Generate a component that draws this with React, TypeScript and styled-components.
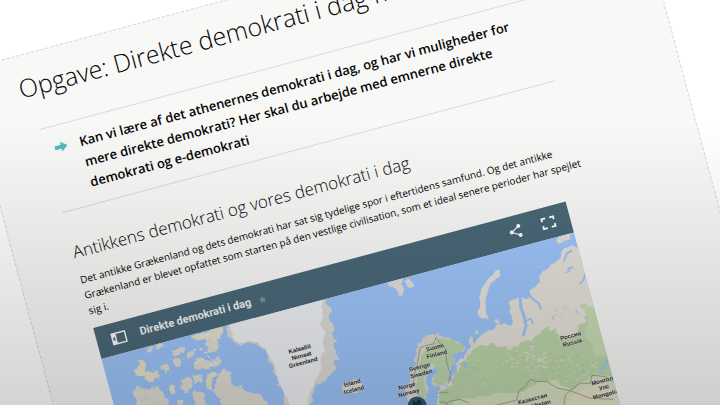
import React from "react";
import styled, { createGlobalStyle } from "styled-components";

const GlobalStyle = createGlobalStyle`
  *, *::before, *::after { box-sizing: border-box; }
  body {
    margin: 0;
    background: #fff;
    color: #050505;
    font-family: "Open Sans", "Noto Sans", sans-serif;
    text-rendering: geometricPrecision;
  }
`;

const Stage = styled.main`
  position: relative;
  height: 100vh;
  overflow: hidden;
  background: #fff;

  &::after {
    content: "";
    position: absolute;
    inset: 0;
    pointer-events: none;
    background: linear-gradient(rgba(0, 0, 0, 0) 30%, rgba(0, 0, 0, 0.17) 100%);
  }
`;

const Paper = styled.article`
  width: calc(100vw - 25px);
  min-height: 640px;
  margin: 70px 0 0 -37px;
  padding: 15px 48px 0;
  background: #f8f8f6;
  border: 1px dashed #d6d6d9;
  transform: rotate(-15deg);
  transform-origin: 0 0;
`;

const Title = styled.h1`
  margin: 0 0 25px;
  font-size: 25px;
  line-height: 36px;
  font-weight: 300;
  white-space: nowrap;
`;

const Content = styled.div`
  max-width: 532px;
  padding-left: 10px;
`;

const Callout = styled.section`
  display: flex;
  gap: 12px;
  max-width: 510px;
  padding: 11px 0 11px 9px;
  border-top: 1px solid #dadad8;
  border-bottom: 1px solid #dadad8;

  p {
    flex: 1;
    margin: 0;
    font-size: 13px;
    line-height: 21px;
    font-weight: 600;
  }
`;

const ArrowIcon = styled.svg`
  width: 14px;
  height: 21px;
  fill: #4fbcc0;
`;

const Heading = styled.h2`
  margin: 28px 0 7px;
  font-size: 17px;
  line-height: 26px;
  font-weight: 300;
`;

const Paragraph = styled.p`
  margin: 0 0 10px;
  font-size: 10px;
  line-height: 16px;
`;

const MapPanel = styled.section`
  max-width: 489px;
`;

const MapBar = styled.header`
  display: flex;
  align-items: center;
  gap: 12px;
  height: 32px;
  padding: 0 14px 0 12px;
  background: #4a6878;
  color: #fff;
  font-family: Roboto, sans-serif;
`;

const MapName = styled.div`
  display: flex;
  align-items: center;
  gap: 8px;
`;

const MapTitle = styled.h3`
  margin: 0;
  font-size: 11px;
  line-height: 16px;
  font-weight: 700;
  color: #f1f4f5;
`;

const IconButton = styled.button<{ $faint?: boolean }>`
  display: flex;
  padding: 0;
  border: 0;
  background: none;
  color: ${(p) => (p.$faint ? "#7f929d" : "#fff")};
`;

const Actions = styled.div`
  display: flex;
  gap: 18px;
  margin-left: auto;
`;

const MapView = styled.div`
  position: relative;
  height: 200px;
  overflow: hidden;
  background: #9dc5fa;
`;

const MapDrawing = styled.svg`
  display: block;
  width: 489px;
  height: 200px;
`;

const MapLabel = styled.span<{ $x: number; $y: number }>`
  position: absolute;
  left: ${(p) => p.$x}px;
  top: ${(p) => p.$y}px;
  transform: translate(-50%, -50%);
  font: 700 6px/7px "Liberation Sans", Arial, sans-serif;
  color: #222;
  text-align: center;
  white-space: pre;
  text-shadow: 0 0 1px #fff, 0 0 1px #fff;
`;

type Pt = [number, number];

/* Small deterministic generator, so that the coast is the same on each render. */
function random(seed: number) {
  let s = seed;
  return () => {
    s = (s * 16807) % 2147483647;
    return s / 2147483647 - 0.5;
  };
}

/* Turns "x,y x,y" into a closed path with a ragged, coast-like edge. */
function coast(text: string, amp = 6, seed = 7) {
  const next = random(seed);
  let pts: Pt[] = text.trim().split(/\s+/).map((p) => p.split(",").map(Number) as Pt);
  let a = amp;
  for (let pass = 0; pass < 2; pass++) {
    const out: Pt[] = [];
    pts.forEach((p, i) => {
      const q = pts[(i + 1) % pts.length];
      out.push(p, [(p[0] + q[0]) / 2 + next() * a, (p[1] + q[1]) / 2 + next() * a]);
    });
    pts = out;
    a = a * 0.8;
  }
  return "M" + pts.map((p) => p.map((n) => n.toFixed(1)).join(" ")).join("L") + "Z";
}

/* Scatter of small ragged patches inside a box. */
function patches(x: number, y: number, w: number, h: number, count: number, size: number, seed: number) {
  const next = random(seed);
  let d = "";
  for (let i = 0; i < count; i++) {
    const cx = x + (next() + 0.5) * w;
    const cy = y + (next() + 0.5) * h;
    const pts: string[] = [];
    for (let k = 0; k < 8; k++) {
      const r = size * (0.7 + next());
      const t = (k / 8) * Math.PI * 2;
      pts.push(`${(cx + Math.cos(t) * r * 1.5).toFixed(1)} ${(cy + Math.sin(t) * r * 0.8).toFixed(1)}`);
    }
    d += "M" + pts.join("L") + "Z";
  }
  return d;
}

const EAST_LAND =
  "175,570 175,530 172,515 185,500 200,502 208,485 218,465 230,450 225,430 242,415 255,405 262,388 278,382 300,348 330,330 350,315 378,312 394,318 398,300 388,275 386,245 410,235 424,230 436,236 452,228 450,210 478,188 480,165 505,145 520,130 542,112 552,84 575,75 600,90 760,300 760,570";
const EAST_GREEN =
  "175,570 200,505 222,470 235,455 232,430 262,412 275,390 300,375 340,385 360,380 385,388 410,378 440,362 475,345 505,325 530,322 545,350 580,352 605,310 622,285 600,255 640,265 760,400 760,570";

const canada = [
  "147,275 160,268 165,288 158,300 172,305 188,308 202,303 211,313 205,325 190,328 176,337 163,325 150,318 137,310 142,292",
  "137,350 150,349 175,360 190,351 207,355 215,366 222,382 237,395 237,425 140,425 134,380",
  "275,326 300,322 306,340 294,358 303,374 282,370 270,347",
  "308,314 335,314 335,340 310,342",
  "350,312 372,305 392,308 368,322 362,345 376,362 350,356 345,332",
  "392,308 410,300 425,312 420,335 432,350 455,345 470,365 500,370 525,392 540,425 400,425 392,385 372,366 378,340",
  "315,272 340,265 372,272 388,258 392,280 360,290 330,298 312,290",
  "345,220 365,205 382,212 388,230 372,245 350,242",
  "300,205 330,192 360,182 395,172 390,200 372,208 340,204 322,212",
  "408,175 450,165 452,186 430,200 412,190",
  "212,285 230,280 240,300 226,312 214,300",
  "245,240 270,232 285,240 270,252 248,254",
  "200,225 222,220 226,234 205,238",
  "175,238 195,232 190,245 177,248",
  "290,250 306,240 312,258 296,266",
  "250,268 270,264 274,280 258,290",
  "238,345 254,348 256,372 242,366",
  "262,385 280,390 290,425 265,425",
  "315,360 335,366 345,390 370,425 320,425 308,385",
];

function MapArt() {
  return (
    <MapDrawing viewBox="0 0 489 200" aria-hidden="true">
      <g transform="rotate(15) translate(-101.4 -359)">
        {/* Canadian islands */}
        <g transform="translate(90 270) scale(0.3333)">
          {canada.map((p, i) => (
            <path key={i} d={coast(p, 13, 11 + i)} fill={i % 4 === 0 ? "#e6e3cb" : "#e0ded4"} />
          ))}
          <path d={patches(140, 285, 60, 35, 8, 3, 5)} fill="#ece4c0" />
          <path d={patches(145, 355, 70, 45, 12, 4, 8)} fill="#d2d2cb" />
          <path d={patches(315, 190, 60, 95, 16, 4, 4)} fill="#eeeeec" />
          <path d={patches(240, 235, 160, 90, 20, 2, 14)} fill="#dedcd2" />
        </g>

        {/* Greenland and Iceland */}
        <g transform="translate(240 270) scale(0.3333)">
          <path
            d={coast("-42,180 -14,120 250,60 256,100 276,125 268,150 284,160 276,188 292,212 284,238 298,270 278,280 290,292 262,320 238,342 222,365 210,425 145,425 130,385 138,365 108,345 115,320 95,305 98,290 82,268 75,240 50,220 20,218 5,230 -20,215 -40,200", 14, 3)}
            fill="#dddcd7"
          />
          <path
            d={coast("-30,180 -14,120 248,60 244,110 250,140 240,165 256,190 246,215 256,240 240,270 246,290 235,315 222,340 208,370 196,425 160,425 142,385 122,350 112,320 104,292 90,265 78,238 52,216 22,212 0,218 -20,205", 7, 9)}
            fill="#eff1f4"
          />
          <path d={coast("308,345 325,342 340,330 362,332 370,352 350,370 318,374 305,360", 10, 6)} fill="#dfded6" />
          <path d={patches(285, 170, 8, 10, 2, 2, 6)} fill="#d9d8d3" />
          <path d={patches(414, 370, 4, 3, 1, 2, 6)} fill="#dddcd4" />
        </g>

        <g transform="translate(380 220) scale(0.3333)">
          {/* Svalbard and Novaya Zemlya */}
          <path d={coast("15,190 40,182 55,172 70,170 68,200 66,232 55,225 45,205 30,200", 9, 4)} fill="#e2e1dc" />
          <path d={coast("75,182 88,176 102,200 90,208 80,195", 7, 5)} fill="#e2e1dc" />
          <path d={coast("350,150 362,152 360,165 345,180 330,195 322,220 315,250 318,280 328,298 305,295 292,280 300,262 298,230 305,205 320,180 340,162", 5, 8)} fill="#e4e3de" />
          <path d={coast("342,304 352,298 362,308 350,312", 3, 8)} fill="#dfddd6" />
          <path d={coast("268,354 278,350 282,370 292,376 278,384 268,372", 4, 8)} fill="#dfddd6" />
          <path d={coast("286,334 294,332 296,342 286,342", 3, 8)} fill="#dfddd6" />
          <path d={coast("530,58 552,44 572,42 566,60 545,68 534,74", 6, 3)} fill="#e2dfd6" />
          <path d={patches(442, 130, 50, 40, 3, 2, 12)} fill="#e2dfd6" />

          {/* Scandinavia */}
          <path
            d={coast("130,352 150,345 172,340 188,352 212,356 240,368 256,382 250,396 228,400 215,402 226,420 213,440 210,460 208,482 190,497 165,502 154,490 160,470 176,450 165,435 150,447 140,470 140,495 146,520 135,548 130,570 80,570 80,530 73,500 90,480 100,450 100,420 106,390 114,368", 13, 21)}
            fill="#dbdad2"
          />
          <path
            d={coast("180,356 212,358 240,370 252,384 246,394 226,396 212,404 222,420 210,440 206,478 190,492 166,496 160,484 172,452 160,430 144,440 132,470 134,500 140,520 128,560 108,570 110,510 112,460 122,410 150,378", 7, 13)}
            fill="#bdd7ad"
          />

          {/* Russia and Central Asia */}
          <path d={coast(EAST_LAND, 9, 31)} fill="#e4e1d8" />
          <path d={coast(EAST_GREEN, 22, 17)} fill="#bbd5aa" />
          <path d={coast("602,252 640,262 670,330 690,400 640,410 625,360 612,330 624,290", 12, 19)} fill="#c8ddb3" />
          <path d={coast("215,560 260,535 320,530 380,520 430,515 470,485 530,480 580,510 620,480 660,465 760,480 760,580 215,580", 14, 23)} fill="#d6e1c0" />
          <path d={coast("560,545 610,510 660,490 760,520 760,580 550,580", 12, 27)} fill="#e5e2c6" />
          <path d={patches(260, 400, 150, 120, 34, 4, 41)} fill="#c9dcb9" />
          <path d={patches(380, 375, 120, 70, 34, 5, 43)} fill="#dddcd2" />
          <path d={patches(440, 400, 210, 90, 60, 4, 47)} fill="#cfdfbc" />
          <path d={patches(400, 400, 260, 80, 40, 4, 49)} fill="#aecd9f" />
          <path d={patches(520, 260, 50, 35, 26, 3, 51)} fill="#d8d6cf" />
          <path d={patches(480, 330, 80, 40, 14, 4, 53)} fill="#bbd5aa" />
          <path d={patches(225, 420, 60, 50, 5, 3, 57)} fill="#9dc5fa" />

          {/* Gulfs, rivers and lakes */}
          <g fill="none" stroke="#9dc5fa" strokeLinecap="round" strokeLinejoin="round">
            <path d="M420 228L422 260L432 290L438 318L430 344" strokeWidth="9" />
            <path d="M438 302L452 296L458 310" strokeWidth="5" />
            <path d="M432 232L450 228L462 240L476 250L482 266" strokeWidth="6" />
            <path d="M558 158L568 152M564 146L578 142M600 192L610 180L616 160" strokeWidth="5" />
            <path d="M552 122L560 100L574 92" strokeWidth="6" />
            <path d="M660 452L674 440L682 420" strokeWidth="7" />
            <path d="M516 290L520 298M588 272L592 278" strokeWidth="4" />
            <path d="M250 428L258 442M240 408L250 412" strokeWidth="8" />
          </g>

          {/* Borders */}
          <g fill="none" stroke="#83877f" strokeWidth="2" strokeLinejoin="round">
            <path d="M168 352L178 368L196 388L200 430L211 460L205 490" />
            <path d="M168 352L160 372L140 376L120 384L112 430L104 460L98 500" />
            <path d="M172 520L206 516M205 545L240 538L265 548M176 545L200 548L210 570" />
            <path d="M330 560L380 548L410 540L416 512L436 500L450 478L470 485L500 484L530 504L570 512L600 490L630 490L636 466L676 470L700 486" />
            <path d="M570 512L556 525L550 560M570 512L630 535L700 538" />
          </g>
        </g>

        {/* Place marker */}
        <circle cx="417" cy="406" r="9.5" fill="#34586e" />
        <path d="M412 405l1-5 3 3 2-4 3 2 1 6z" fill="#1b3242" />
      </g>
    </MapDrawing>
  );
}

const labels: { x: number; y: number; text: string }[] = [
  { x: 194, y: 50, text: "Kalaallit\nNunaat\nGreenland" },
  { x: 236, y: 93, text: "Ísland\nIceland" },
  { x: 325, y: 80, text: "Suomi\nFinland" },
  { x: 305, y: 95, text: "Sverige\nSweden" },
  { x: 288, y: 110, text: "Norge\nNorway" },
  { x: 459, y: 104, text: "Россия\nRussia" },
  { x: 406, y: 155, text: "Казахстан\nKazakhstan" },
  { x: 478, y: 159, text: "Монгол\nУлс\nMongolia" },
];

export default function App() {
  return (
    <>
      <GlobalStyle />
      <Stage>
        <Paper>
          <Title>Opgave: Direkte demokrati i dag med</Title>
          <Content>
            <Callout>
              <ArrowIcon viewBox="0 0 14 21" aria-hidden="true">
                <path d="M0.500 8.500h6.500V5.500l6.500 5-6.500 5v-3H0.500z" />
              </ArrowIcon>
              <p>
                Kan vi lære af det athenernes demokrati i dag, og har vi muligheder for mere direkte
                demokrati? Her skal du arbejde med emnerne direkte demokrati og e-demokrati
              </p>
            </Callout>
            <Heading>Antikkens demokrati og vores demokrati i dag</Heading>
            <Paragraph>
              Det antikke Grækenland og dets demokrati har sat sig tydelige spor i eftertidens
              samfund. Og det antikke Grækenland er blevet opfattet som starten på den vestlige
              civilisation, som et ideal senere perioder har spejlet sig i.
            </Paragraph>
            <MapPanel>
              <MapBar>
                <IconButton type="button" aria-label="Vis panel">
                  <svg width="20" height="16" viewBox="0 0 20 16">
                    <path d="M3 2h5v12H3z" fill="currentColor" />
                    <path d="M8 2.700h9.300v10.600H8" fill="none" stroke="currentColor" strokeWidth="1.400" />
                    <path d="M6.500 5.500L4 8l2.500 2.500z" fill="#4a6878" />
                  </svg>
                </IconButton>
                <MapName>
                  <MapTitle>Direkte demokrati i dag</MapTitle>
                  <IconButton type="button" aria-label="Stjerne" $faint>
                    <svg width="8" height="8" viewBox="0 0 24 24" fill="currentColor">
                      <path d="M12 1l3.200 7.600 8.300.7-6.300 5.400 1.900 8.100L12 18.500l-7.100 4.300 1.900-8.100L.5 9.300l8.300-.7z" />
                    </svg>
                  </IconButton>
                </MapName>
                <Actions>
                  <IconButton type="button" aria-label="Del">
                    <svg width="16" height="16" viewBox="0 0 24 24" fill="currentColor">
                      <path d="M18 16.080c-.76 0-1.440.3-1.960.77L8.910 12.700c.05-.23.09-.46.09-.7s-.04-.47-.09-.7l7.050-4.110c.54.5 1.250.81 2.040.81 1.660 0 3-1.340 3-3s-1.340-3-3-3-3 1.340-3 3c0 .24.04.47.09.7L8.040 9.810C7.500 9.310 6.790 9 6 9c-1.660 0-3 1.340-3 3s1.340 3 3 3c.79 0 1.500-.31 2.040-.81l7.120 4.160c-.05.21-.08.43-.08.65 0 1.610 1.310 2.920 2.920 2.920s2.920-1.310 2.920-2.920-1.310-2.920-2.920-2.920z" />
                    </svg>
                  </IconButton>
                  <IconButton type="button" aria-label="Fuld skærm">
                    <svg width="16" height="16" viewBox="0 0 16 16" fill="none" stroke="currentColor" strokeWidth="1.800">
                      <path d="M2 6V3h4M10 3h4v3M14 10v3h-4M6 13H2v-3" />
                    </svg>
                  </IconButton>
                </Actions>
              </MapBar>
              <MapView>
                <MapArt />
                {labels.map((l) => (
                  <MapLabel key={l.text} $x={l.x} $y={l.y}>
                    {l.text}
                  </MapLabel>
                ))}
              </MapView>
            </MapPanel>
          </Content>
        </Paper>
      </Stage>
    </>
  );
}
